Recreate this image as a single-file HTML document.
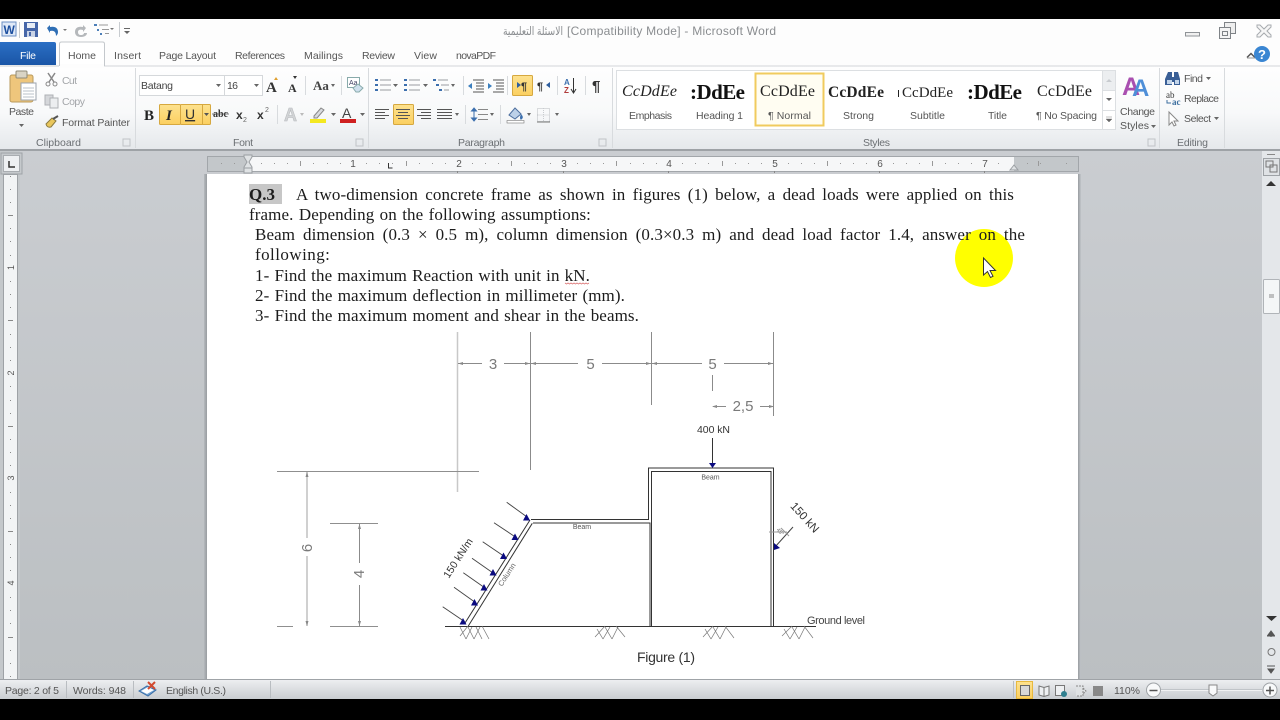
<!DOCTYPE html>
<html lang="en"><head><meta charset="utf-8"><title>Microsoft Word</title>
<style>
html,body{margin:0;padding:0;width:1280px;height:720px;overflow:hidden;background:#000}
#w{position:absolute;left:0;top:0;width:1280px;height:720px;filter:blur(.35px)}
#s{position:absolute;left:0;top:0;display:block}
.u{font-family:"Liberation Sans",sans-serif;font-size:10.5px;fill:#555}
.g{font-family:"Liberation Sans",sans-serif;font-size:10.500px;fill:#6b6f73}
.n{font-family:"Liberation Sans",sans-serif;font-size:10px;fill:#666}
.l{position:absolute;font-family:"Liberation Serif",serif;font-size:17px;line-height:20px;height:20px;color:#1c1c1c;letter-spacing:.1px;white-space:nowrap;overflow:hidden;text-align:justify;text-align-last:justify}
</style></head><body><div id="w">
<svg id="s" width="1280" height="720" viewBox="0 0 1280 720" xmlns="http://www.w3.org/2000/svg">
<defs>
<linearGradient id="rb" x1="0" y1="0" x2="0" y2="1"><stop offset="0" stop-color="#fefefe"/><stop offset=".55" stop-color="#f8f9fa"/><stop offset="1" stop-color="#e5e8eb"/></linearGradient>
<linearGradient id="bg" x1="0" y1="0" x2="0" y2="1"><stop offset="0" stop-color="#cacdd1"/><stop offset="1" stop-color="#bbbfc2"/></linearGradient>
<linearGradient id="st" x1="0" y1="0" x2="0" y2="1"><stop offset="0" stop-color="#eff0f2"/><stop offset="1" stop-color="#c9cdd1"/></linearGradient>
<linearGradient id="fl" x1="0" y1="0" x2="0" y2="1"><stop offset="0" stop-color="#2b6fc4"/><stop offset="1" stop-color="#1a55a6"/></linearGradient>
<linearGradient id="or" x1="0" y1="0" x2="0" y2="1"><stop offset="0" stop-color="#fde28f"/><stop offset="1" stop-color="#fbcf60"/></linearGradient>
<linearGradient id="sh" x1="0" y1="0" x2="1" y2="0"><stop offset="0" stop-color="#b5b9bd"/><stop offset="1" stop-color="#989ca0"/></linearGradient>
<linearGradient id="sr" x1="0" y1="0" x2="1" y2="0"><stop offset="0" stop-color="#989ca0"/><stop offset="1" stop-color="#c2c6ca"/></linearGradient>
</defs>

<!-- window chrome -->
<rect x="0" y="19" width="1280" height="680" fill="#fdfdfd"/>
<rect x="0" y="66" width="1280" height="84" fill="url(#rb)"/>
<line x1="0" y1="66" x2="59" y2="66" stroke="#c9cdd1"/><line x1="104" y1="66" x2="1280" y2="66" stroke="#d2d5d9"/>

<!-- QAT -->
<rect x="2" y="22" width="14" height="14" fill="#dfe9f7" stroke="#6b8fc4"/><text x="3.500" y="34" font-family="Liberation Sans" font-weight="bold" font-size="12" fill="#1d4f9f">W</text>
<line x1="19.500" y1="22" x2="19.500" y2="38" stroke="#c8ccd0"/>
<path d="M24 22h14v15h-14z" fill="#4666a8"/><rect x="27" y="23" width="8" height="5" fill="#e8edf5"/><rect x="27" y="31" width="8" height="6" fill="#c9d3e6"/><rect x="29" y="32" width="2" height="4" fill="#4666a8"/>
<path d="M47 28l3-3v2c5-1 8 1 8 5 0 2-1 3-2 4 0-4-2-6-6-5v2z" fill="#2f6fb5"/>
<path d="M63 29h4l-2 2z" fill="#777"/>
<path d="M86 28l-3-3v2c-5-1-8 1-8 5 0 3 2 5 6 5s6-2 6-4h-3c0 1-1 2-3 2s-3-1-3-3 2-3 5-2v2z" fill="#b5b8bb"/>
<g fill="#4d7fb8"><rect x="94" y="24" width="3" height="2"/><rect x="97" y="29" width="2" height="2"/><rect x="100" y="33" width="2" height="2"/></g>
<path d="M99 25h9M102 29.500h7M105 33.500h4" stroke="#999"/>
<path d="M110 28h4l-2 2z" fill="#777"/>
<line x1="119.500" y1="22" x2="119.500" y2="37" stroke="#c8ccd0"/>
<path d="M124 31h6l-3 3z" fill="#666"/><rect x="124" y="28" width="6" height="1" fill="#666"/>

<!-- title -->
<text x="503" y="35" font-family="Liberation Sans,DejaVu Sans,sans-serif" font-size="12" fill="#8a8d90" textLength="60" lengthAdjust="spacingAndGlyphs">الاسئلة التعليمية</text>
<text x="567" y="35" font-family="Liberation Sans,sans-serif" font-size="12" fill="#8a8d90" textLength="209">[Compatibility Mode]  -  Microsoft Word</text>

<!-- window controls -->
<rect x="1185.500" y="32.500" width="14" height="3.500" fill="#f0f0f0" stroke="#8f9397"/>
<rect x="1224.500" y="22.500" width="11" height="11" fill="#eee" stroke="#7f8387"/><rect x="1219.500" y="27.500" width="11" height="11" fill="#f4f4f4" stroke="#7f8387"/><rect x="1222.500" y="31.500" width="5" height="4" fill="none" stroke="#7f8387"/>
<path d="M1257 25l3 0 4 4 4-4 3 0 0 2-4 4 4 4 0 2-3 0-4-4-4 4-3 0 0-2 4-4-4-4z" fill="#f6f6f6" stroke="#a7abaf"/>
<path d="M1247 57.500l4-4 4 4" fill="none" stroke="#555" stroke-width="1.500"/><path d="M1247 58h8" stroke="#999"/>
<circle cx="1262" cy="54" r="8" fill="#3a86d2"/><text x="1262" y="59" text-anchor="middle" font-family="Liberation Sans" font-weight="bold" font-size="13" fill="#fff">?</text>

<!-- tabs -->
<path d="M0 42h54q2 0 2 2v21h-56z" fill="url(#fl)"/>
<text x="20" y="59" font-family="Liberation Sans" font-size="10.500" fill="#fff" textLength="16">File</text>
<path d="M59.500 66v-22q0-2 2-2h41q2 0 2 2v22" fill="#fff" stroke="#c4c8cc"/><rect x="60" y="64" width="44" height="4" fill="#fdfdfd"/>
<text class="u" x="68" y="59" textLength="28">Home</text>
<text class="u" x="114" y="59" textLength="27">Insert</text>
<text class="u" x="159" y="59" textLength="57">Page Layout</text>
<text class="u" x="235" y="59" textLength="50">References</text>
<text class="u" x="304" y="59" textLength="39">Mailings</text>
<text class="u" x="362" y="59" textLength="33">Review</text>
<text class="u" x="414" y="59" textLength="23">View</text>
<text class="u" x="456" y="59" textLength="40">novaPDF</text>

<!-- group separators -->
<g stroke="#d8dbde"><path d="M135.500 68v80M368.500 68v80M612.500 68v80M1159.500 68v80M1224.500 68v80"/></g>

<!-- clipboard -->
<rect x="10" y="75" width="23" height="27" rx="2" fill="#eec67c" stroke="#b99a5c"/><rect x="16" y="71" width="11" height="7" rx="1" fill="#d9d4c5" stroke="#8f8a78"/>
<path d="M21 83h15v17h-15z" fill="#fff" stroke="#9ba3ad"/><path d="M23 88h11M23 91h11M23 94h11M23 97h11" stroke="#b9c0c9"/>
<text class="u" x="9" y="115" textLength="25">Paste</text>
<path d="M19 124h5l-2.500 3z" fill="#666"/>
<path d="M48 73l6 9M55 73l-6 9" stroke="#888" stroke-width="1.500"/><circle cx="48" cy="84" r="2" fill="none" stroke="#888"/><circle cx="55" cy="84" r="2" fill="none" stroke="#888"/>
<text x="62" y="84" style="font:10.500px 'Liberation Sans',sans-serif;fill:#a3a6a9" textLength="15">Cut</text>
<rect x="45" y="95" width="8" height="10" fill="#d5d7da" stroke="#aeb1b5"/><rect x="50" y="98" width="8" height="10" fill="#eceef0" stroke="#aeb1b5"/>
<text x="62" y="105" style="font:10.500px 'Liberation Sans',sans-serif;fill:#a3a6a9" textLength="23">Copy</text>
<path d="M46 124l6-6 4 3-5 6q-4 1-5-3z" fill="#e9c65c" stroke="#8a7a40"/><path d="M53 119l5-3" stroke="#555" stroke-width="2"/>
<text class="u" x="62" y="126" textLength="68">Format Painter</text>
<text class="g" x="36" y="146" textLength="45">Clipboard</text>
<rect x="123" y="139" width="7" height="7" fill="none" stroke="#c0c3c7"/>

<!-- font -->
<rect x="139.500" y="75.500" width="85" height="20" fill="#fff" stroke="#d5d8db"/><rect x="224.500" y="75.500" width="38" height="20" fill="#fff" stroke="#d5d8db"/>
<text class="u" x="141" y="89" textLength="32" style="fill:#444">Batang</text><path d="M216 84h5l-2.500 3z" fill="#666"/>
<text class="u" x="227" y="89" textLength="11" style="fill:#444">16</text><path d="M254 84h5l-2.500 3z" fill="#666"/>
<text x="266" y="92" font-family="Liberation Serif" font-weight="bold" font-size="15" fill="#333">A</text><path d="M276 77l2 3h-4z" fill="#e0a030"/>
<text x="288" y="92" font-family="Liberation Serif" font-weight="bold" font-size="12" fill="#333">A</text><path d="M295 79l2 -3h-4z" fill="#333"/>
<line x1="305.500" y1="76" x2="305.500" y2="95" stroke="#d8dbde"/>
<text x="313" y="90" font-family="Liberation Serif" font-weight="bold" font-size="13" fill="#444">Aa</text><path d="M331 84h4l-2 3z" fill="#666"/>
<line x1="341.500" y1="76" x2="341.500" y2="95" stroke="#d8dbde"/>
<rect x="347.500" y="77.500" width="12" height="10" fill="#fff" stroke="#8aa"/><text x="349" y="85" font-family="Liberation Sans" font-size="7" fill="#446">Aa</text><path d="M353 88l5-4 5 4-4 4h-3z" fill="#cfe0ee" stroke="#8aa"/>
<text x="144" y="120" font-family="Liberation Serif" font-weight="bold" font-size="15" fill="#222">B</text>
<rect x="159.500" y="104.500" width="21" height="20" rx="1" fill="url(#or)" stroke="#d6a83f"/>
<text x="166" y="120" font-family="Liberation Serif" font-style="italic" font-weight="bold" font-size="15" fill="#222">I</text>
<rect x="180.500" y="104.500" width="30" height="20" rx="1" fill="url(#or)" stroke="#d6a83f"/><line x1="202.500" y1="105" x2="202.500" y2="124" stroke="#d6a83f"/>
<text x="185" y="119" font-family="Liberation Sans" font-size="14" fill="#333" text-decoration="underline">U</text><path d="M204 113h5l-2.500 3z" fill="#555"/>
<text x="213" y="117" font-family="Liberation Serif" font-weight="bold" font-size="10" fill="#333" textLength="15">abc</text><path d="M212 114h17" stroke="#555" stroke-width=".8"/>
<text x="236" y="119" font-family="Liberation Sans" font-weight="bold" font-size="12" fill="#333">x</text><text x="243" y="122" font-family="Liberation Sans" font-size="7" fill="#666">2</text>
<text x="257" y="119" font-family="Liberation Sans" font-weight="bold" font-size="12" fill="#333">x</text><text x="265" y="112" font-family="Liberation Sans" font-size="7" fill="#666">2</text>
<line x1="277.500" y1="105" x2="277.500" y2="124" stroke="#d8dbde"/>
<text x="284" y="121" font-family="Liberation Sans" font-weight="bold" font-size="18" fill="#d2d4d6" stroke="#b5b8bb" stroke-width=".5">A</text>
<path d="M300 113h4l-2 3z" fill="#bbb"/>
<path d="M314 116l7-8 3 2-7 8h-3z" fill="#d8dade" stroke="#888"/><rect x="310" y="119" width="16" height="4" fill="#f4e820"/><path d="M331 113h5l-2.500 3z" fill="#666"/>
<text x="342" y="118" font-family="Liberation Sans" font-size="14" fill="#444">A</text><rect x="340" y="119" width="16" height="4" fill="#cf2020"/><path d="M360 113h5l-2.500 3z" fill="#666"/>
<text class="g" x="233" y="146" textLength="20">Font</text>
<rect x="356" y="139" width="7" height="7" fill="none" stroke="#c0c3c7"/>

<!-- paragraph -->
<g stroke="#9a9da1"><path d="M380 80h11M380 85h11M380 90h11M409 80h11M409 85h11M409 90h11"/></g>
<g fill="#3c6fae"><rect x="375" y="79" width="3" height="2"/><rect x="375" y="84" width="3" height="2"/><rect x="375" y="89" width="3" height="2"/><rect x="404" y="79" width="3" height="2"/><rect x="404" y="84" width="3" height="2"/><rect x="404" y="89" width="3" height="2"/><rect x="433" y="79" width="3" height="2"/><rect x="436" y="84" width="3" height="2"/><rect x="439" y="89" width="3" height="2"/></g>
<path d="M438 80h10M441 85h8M444 90h5" stroke="#9a9da1"/>
<path d="M393 84h5l-2.500 3zM423 84h5l-2.500 3zM451 84h4l-2 3z" fill="#666"/>
<line x1="463.500" y1="76" x2="463.500" y2="95" stroke="#d8dbde"/>
<path d="M473 80h11M476 83h8M476 86h8M476 89h8M473 92h11" stroke="#555"/><path d="M468 86l4-3v6z" fill="#3c7fbe"/>
<path d="M493 80h11M496 83h8M496 86h8M496 89h8M493 92h11" stroke="#555"/><path d="M492 86l-4-3v6z" fill="#3c7fbe"/>
<line x1="507.500" y1="76" x2="507.500" y2="95" stroke="#d8dbde"/>
<rect x="512.500" y="75.500" width="20" height="20" rx="1" fill="url(#or)" stroke="#d6a83f"/>
<path d="M517 82l4 3-4 3z" fill="#2f5f9f"/><text x="521" y="90" font-family="Liberation Sans" font-weight="bold" font-size="11" fill="#333">¶</text>
<text x="537" y="90" font-family="Liberation Sans" font-weight="bold" font-size="11" fill="#333">¶</text><path d="M550 82l-4 3 4 3z" fill="#2f5f9f"/>
<line x1="557.500" y1="76" x2="557.500" y2="95" stroke="#d8dbde"/>
<text x="564" y="85" font-family="Liberation Sans" font-weight="bold" font-size="8" fill="#3c6fae">A</text><text x="564" y="93" font-family="Liberation Sans" font-weight="bold" font-size="8" fill="#b03a3a">Z</text>
<path d="M573.500 78v14M571 89l2.500 4 2.500-4" stroke="#333" fill="none"/>
<line x1="585.500" y1="76" x2="585.500" y2="95" stroke="#d8dbde"/>
<text x="592" y="91" font-family="Liberation Sans" font-weight="bold" font-size="15" fill="#333">¶</text>
<path d="M375 109.500h14M375 112.500h10M375 115.500h14M375 118.500h10" stroke="#555"/>
<rect x="393.500" y="104.500" width="20" height="20" rx="1" fill="url(#or)" stroke="#d6a83f"/>
<path d="M396 109.500h14M398 112.500h10M396 115.500h14M398 118.500h10" stroke="#555"/>
<path d="M417 109.500h14M421 112.500h10M417 115.500h14M421 118.500h10" stroke="#555"/>
<path d="M437 109.500h15M437 112.500h15M437 115.500h15M437 118.500h15" stroke="#555"/>
<path d="M455 113h4l-2 3z" fill="#666"/>
<line x1="465.500" y1="105" x2="465.500" y2="124" stroke="#d8dbde"/>
<path d="M478 109.500h10M478 114.500h10M478 119.500h10" stroke="#888"/><path d="M474 108l2.500 3h-5zM474 121l2.500-3h-5zM474 111v7" stroke="#3c6fae" fill="#3c6fae"/>
<path d="M490 113h4l-2 3z" fill="#666"/>
<line x1="500.500" y1="105" x2="500.500" y2="124" stroke="#d8dbde"/>
<path d="M509 115l6-7 6 6-6 5z" fill="#bcd0e8" stroke="#4d6f9f"/><path d="M521 114q3 3 1 5t-2-2z" fill="#3c6fae"/><rect x="507" y="120.500" width="17" height="2.500" fill="#fff" stroke="#777" stroke-width=".6"/>
<path d="M527 113h4l-2 3z" fill="#666"/>
<rect x="537.500" y="108.500" width="12" height="13" fill="none" stroke="#b8bbbf" stroke-dasharray="1 1"/><path d="M537.500 115h12M543.500 108v13" stroke="#c8cbcf" stroke-dasharray="1 1"/><path d="M537 122h13" stroke="#777"/>
<path d="M555 113h4l-2 3z" fill="#666"/>
<text class="g" x="458" y="146" textLength="47">Paragraph</text>
<rect x="599" y="139" width="7" height="7" fill="none" stroke="#c0c3c7"/>

<!-- styles gallery -->
<rect x="616.500" y="70.500" width="486" height="59" fill="#fff" stroke="#dcdfe2"/>
<rect x="755.500" y="73.500" width="68" height="52" fill="#fffdf2" stroke="#f0cb5e" stroke-width="2"/>
<g font-family="Liberation Serif,serif" fill="#222">
<text x="622" y="96" font-size="16" font-style="italic" textLength="55">CcDdEe</text>
<text x="690" y="99" font-size="21" font-weight="bold" fill="#111" textLength="55">:DdEe</text>
<text x="760" y="96" font-size="16" textLength="55">CcDdEe</text>
<text x="828" y="97" font-size="15.500" font-weight="bold" textLength="56">CcDdEe</text>
<rect x="898" y="90" width="1" height="7" fill="#222"/>
<text x="902" y="97" font-size="15" textLength="51">CcDdEe</text>
<text x="967" y="99" font-size="21" font-weight="bold" fill="#111" textLength="55">:DdEe</text>
<text x="1037" y="96" font-size="16" textLength="55">CcDdEe</text>
</g>
<text class="u" x="629" y="119" textLength="43">Emphasis</text>
<text class="u" x="696" y="119" textLength="47">Heading 1</text>
<text class="u" x="768" y="119" textLength="43">¶ Normal</text>
<text class="u" x="843" y="119" textLength="31">Strong</text>
<text class="u" x="910" y="119" textLength="35">Subtitle</text>
<text class="u" x="988" y="119" textLength="19">Title</text>
<text class="u" x="1036" y="119" textLength="61">¶ No Spacing</text>
<rect x="1102.500" y="70.500" width="13" height="20" fill="#eceef0" stroke="#dcdfe2"/><rect x="1102.500" y="90.500" width="13" height="20" fill="#fff" stroke="#dcdfe2"/><rect x="1102.500" y="110.500" width="13" height="19" fill="#fff" stroke="#dcdfe2"/>
<path d="M1106 82l3-3 3 3z" fill="#c8cbcf"/><path d="M1106 98h6l-3 3z" fill="#666"/><path d="M1106 117h6M1106 119h6l-3 3z" fill="#666" stroke="#666" stroke-width=".4"/>
<text x="1122" y="95" font-family="Liberation Sans" font-weight="bold" font-size="25" fill="#a94fb0">A</text>
<text x="1132" y="96" font-family="Liberation Sans" font-weight="bold" font-size="24" fill="#4f8fd8">A</text>
<text class="u" x="1120" y="115" textLength="35">Change</text>
<text class="u" x="1120" y="129" textLength="29">Styles</text><path d="M1151 125h5l-2.500 3z" fill="#666"/>
<text class="g" x="863" y="146" textLength="27">Styles</text>
<rect x="1148" y="139" width="7" height="7" fill="none" stroke="#c0c3c7"/>

<!-- editing -->
<path d="M1168 72h4v5h2v-5h4l2 7v6h-6v-3h-2v3h-7v-6z" fill="#3a5f96"/><rect x="1167" y="80" width="5" height="4" fill="#c3d5ea"/><rect x="1175" y="80" width="4" height="4" fill="#c3d5ea"/>
<text class="u" x="1184" y="82" textLength="19">Find</text><path d="M1206 77h5l-2.500 3z" fill="#666"/>
<text x="1166" y="98" font-family="Liberation Serif" font-size="9" fill="#333">ab</text><text x="1172" y="105" font-family="Liberation Serif" font-weight="bold" font-size="9" fill="#3c6f9f">ac</text><path d="M1167 100v3h4" fill="none" stroke="#3c6f9f"/>
<text class="u" x="1184" y="102" textLength="35">Replace</text>
<path d="M1169 112v13l3-3 2 4 2-1-2-4h4z" fill="#fff" stroke="#888"/>
<text class="u" x="1184" y="122" textLength="27">Select</text><path d="M1214 117h5l-2.500 3z" fill="#666"/>
<text class="g" x="1177" y="146" textLength="31">Editing</text>

<!-- workspace -->
<rect x="0" y="150" width="1262" height="529" fill="url(#bg)"/>
<rect x="0" y="149" width="1280" height="2" fill="#9ea2a6"/>
<rect x="1262" y="151" width="18" height="528" fill="#e4e7ea"/>
<rect x="0" y="151" width="20" height="528" fill="#c4c8cb"/>
<!-- L -->
<rect x="1" y="153" width="21" height="21" fill="#c5c9cc" stroke="#9fa3a7"/><rect x="3.500" y="155.500" width="16" height="16" fill="#eef0f2" stroke="#a9adb1"/><path d="M9 161v6h6" fill="none" stroke="#333" stroke-width="1.500"/>
<!-- vertical ruler -->
<rect x="3.500" y="174.500" width="14" height="505" fill="#f2f4f5" stroke="#9ea2a6"/>
<g fill="#888"><path d="M10 176h1v1h-1zM10 189h1v1h-1zM10 202h1v1h-1zM10 228h1v1h-1zM10 241h1v1h-1zM10 255h1v1h-1zM10 281h1v1h-1zM10 294h1v1h-1zM10 307h1v1h-1zM10 334h1v1h-1zM10 347h1v1h-1zM10 360h1v1h-1zM10 386h1v1h-1zM10 400h1v1h-1zM10 413h1v1h-1zM10 439h1v1h-1zM10 452h1v1h-1zM10 465h1v1h-1zM10 492h1v1h-1zM10 505h1v1h-1zM10 518h1v1h-1zM10 544h1v1h-1zM10 557h1v1h-1zM10 570h1v1h-1zM10 597h1v1h-1zM10 610h1v1h-1zM10 623h1v1h-1zM10 650h1v1h-1zM10 663h1v1h-1zM10 676h1v1h-1z"/>
<path d="M8 215h5v1h-5zM8 320h5v1h-5zM8 426h5v1h-5zM8 531h5v1h-5zM8 637h5v1h-5z"/></g>
<g style="font:9px 'Liberation Sans',sans-serif;fill:#555" text-anchor="middle">
<text transform="translate(14,267.500) rotate(-90)">1</text><text transform="translate(14,373) rotate(-90)">2</text><text transform="translate(14,478) rotate(-90)">3</text><text transform="translate(14,583) rotate(-90)">4</text></g>

<!-- horizontal ruler -->
<rect x="207.500" y="156.500" width="871" height="15" fill="#c3c7ca" stroke="#a2a6aa"/>
<rect x="248" y="157" width="766" height="14" fill="#f6f7f8"/>
<g fill="#999"><path d="M221 163h1v1h-1zM234 163h1v1h-1zM261 163h1v1h-1zM274 163h1v1h-1zM287 163h1v1h-1zM313 163h1v1h-1zM327 163h1v1h-1zM340 163h1v1h-1zM366 163h1v1h-1zM379 163h1v1h-1zM392 163h1v1h-1zM419 163h1v1h-1zM432 163h1v1h-1zM445 163h1v1h-1zM472 163h1v1h-1zM485 163h1v1h-1zM498 163h1v1h-1zM524 163h1v1h-1zM537 163h1v1h-1zM550 163h1v1h-1zM577 163h1v1h-1zM590 163h1v1h-1zM603 163h1v1h-1zM630 163h1v1h-1zM643 163h1v1h-1zM656 163h1v1h-1zM682 163h1v1h-1zM695 163h1v1h-1zM708 163h1v1h-1zM735 163h1v1h-1zM748 163h1v1h-1zM761 163h1v1h-1zM788 163h1v1h-1zM801 163h1v1h-1zM814 163h1v1h-1zM840 163h1v1h-1zM853 163h1v1h-1zM866 163h1v1h-1zM893 163h1v1h-1zM906 163h1v1h-1zM919 163h1v1h-1zM945 163h1v1h-1zM958 163h1v1h-1zM971 163h1v1h-1zM998 163h1v1h-1zM1027 163h1v1h-1zM1040 163h1v1h-1zM1066 163h1v1h-1z"/>
<path d="M300 161h1v5h-1zM406 161h1v5h-1zM511 161h1v5h-1zM616 161h1v5h-1zM722 161h1v5h-1zM827 161h1v5h-1zM932 161h1v5h-1zM1038 161h1v5h-1z"/></g>
<g style="font:10px 'Liberation Sans',sans-serif;fill:#555" text-anchor="middle"><text x="353" y="167">1</text><text x="459" y="167">2</text><text x="564" y="167">3</text><text x="669" y="167">4</text><text x="775" y="167">5</text><text x="880" y="167">6</text><text x="985" y="167">7</text></g>
<path d="M244 155h8v2l-3 5 3 5v6h-8v-6l3-5-3-5z" fill="#dfe2e4" stroke="#9a9ea2"/><path d="M244 168h8" stroke="#9a9ea2"/>
<path d="M1010 170l4-5 4 5z" fill="#dfe2e4" stroke="#9a9ea2"/>
<path d="M388.500 163v5h4" fill="none" stroke="#333"/>
<g fill="#888"><rect x="457" y="171" width="1" height="2"/><rect x="563" y="171" width="1" height="2"/><rect x="668" y="171" width="1" height="2"/><rect x="774" y="171" width="1" height="2"/><rect x="879" y="171" width="1" height="2"/><rect x="984" y="171" width="1" height="2"/></g>

<!-- page -->
<rect x="204" y="174" width="3" height="505" fill="url(#sh)"/><rect x="1078" y="174" width="3" height="505" fill="url(#sr)"/>
<rect x="207" y="174" width="871" height="505" fill="#fff"/>
<rect x="249" y="184" width="33" height="20" fill="#c7c7c7"/>
<circle cx="984" cy="258" r="29" fill="#ffff00"/>

<!-- figure -->
<g fill="none" stroke="#8b8b8b">
<path d="M457.500 332v160" stroke="#c8c8c8" stroke-width="1.500"/>
<path d="M530.500 332v138M651.500 332v73M773.500 332v84M712.500 375v16"/>
<path d="M458 363.500h24M504 363.500h26M531 363.500h47M602 363.500h49M652 363.500h50M724 363.500h49M713 406.500h13M760 406.500h13"/>
<path d="M277 471.500h202M330 523.500h48M330 626.500h48M277 626.500h16" stroke="#8f8f8f"/>
<path d="M307 472v66M307 556v70" stroke="#c0c0c0" stroke-width="1.500"/>
<path d="M359.500 524v39M359.500 585v41"/>
</g>
<g fill="#888"><path d="M458 363.500l5-1.500v3zM530 363.500l-5-1.500v3zM531 363.500l5-1.500v3zM651 363.500l-5-1.500v3zM652 363.500l5-1.500v3zM773 363.500l-5-1.500v3zM712 406.500l5-1.500v3zM774 406.500l-5-1.500v3zM307 472l-1.500 5h3zM307 626l-1.500-5h3zM359.500 524l-1.500 5h3zM359.500 626l-1.500-5h3z"/></g>
<g fill="#7a7a7a" font-family="Liberation Sans,sans-serif" font-size="15" text-anchor="middle">
<text x="493" y="369">3</text>
<text x="590.500" y="369">5</text>
<text x="712.500" y="369">5</text>
<text x="743" y="411">2,5</text>
<text transform="translate(312,548) rotate(-90)">6</text>
<text transform="translate(364,574) rotate(-90)">4</text>
</g>
<g fill="none" stroke="#333">
<path d="M712.500 438v26"/>
<path d="M531 519.500h117.500v-51.500h125v158.500"/>
<path d="M533 523h117v103M651.500 626v-154.500h119.500v154.500"/>
<path d="M530 520l-65 103M532.300 523.300l-64 102.700"/>
<path d="M445 626.500h371"/>
</g>
<path d="M709 463h7l-3.500 5z" fill="#0a0a80"/>
<g stroke="#444" fill="none" stroke-width=".9">
<path d="M506.700 502.300l20 14.400M494 522.700l21 14M482.700 541.700l20.600 14M472 558.300l20.700 14.400M463.300 572.700l20.700 14.600M454 587.300l20.700 14.700M442.700 606.700l20.600 14"/>
</g>
<g fill="#0a0a80"><path d="M526.500 514l3.500 6.500h-7zM515 533.500l3.500 6.500h-7zM503.500 552.500l3.500 6.500h-7zM493 569l3.500 6.500h-7zM484 584l3.500 6.500h-7zM474.500 599l3.500 6.500h-7zM463 618l3.500 6.500h-7z"/></g>
<g stroke="#777" fill="none" stroke-width=".7">
<path d="M460 636l8-10M466 639l-6-12M466 639l6-12M474 639l-6-12M474 639l6-12M482 639l-6-12M489 639l-7-13"/>
<path d="M595 637l10-11M603 639l-6-10M603 639l7-12M612 639l-7-12M612 639l6-12M625 637l-9-11"/>
<path d="M703 637l10-11M711 639l-6-10M711 639l7-12M720 639l-7-12M720 639l6-12M734 638l-9-12"/>
<path d="M782 636l10-10M790 639l-6-10M790 639l7-12M799 639l-7-12M799 639l6-12M813 638l-9-12"/>
</g>
<path d="M793 527l-18 20" stroke="#444" fill="none"/><path d="M769 532h18" stroke="#999" fill="none"/><path d="M781 528l8 8" stroke="#999" fill="none"/>
<path d="M774 543l6 5-6 2z" fill="#0a0a80"/>
<g font-family="Liberation Sans,sans-serif">
<text x="697" y="433" font-size="10.500" fill="#333" textLength="33">400 kN</text>
<text x="582" y="529" font-size="7" fill="#555" text-anchor="middle">Beam</text>
<text x="710.500" y="479.500" font-size="7" fill="#555" text-anchor="middle">Beam</text>
<text transform="translate(461,560) rotate(-57)" font-size="10.500" fill="#333" text-anchor="middle">150 kN/m</text>
<text transform="translate(509,576) rotate(-57)" font-size="7.500" fill="#666" text-anchor="middle">Column</text>
<text transform="translate(802,520) rotate(48)" font-size="11.500" fill="#333" text-anchor="middle">150 kN</text>
<text transform="translate(779,533) rotate(48)" font-size="5.500" fill="#777" text-anchor="middle">45°</text>
<text x="807" y="624" font-size="11" fill="#444" textLength="58">Ground level</text>
<text x="637" y="662" font-size="14" fill="#333" textLength="58">Figure (1)</text>
</g>

<!-- scrollbar -->
<rect x="1263.500" y="158.500" width="16" height="17" fill="#dfe2e5" stroke="#9ea2a6"/><rect x="1266" y="161" width="7" height="6" fill="none" stroke="#777"/><rect x="1270" y="165" width="7" height="7" fill="none" stroke="#777"/>
<path d="M1267 154.500h8" stroke="#888"/>
<path d="M1266 186l5-5 5 5z" fill="#333"/>
<rect x="1263.500" y="279.500" width="16" height="34" rx="1" fill="#f4f6f7" stroke="#b0b4b8"/><path d="M1269 295h5M1269 297h5" stroke="#888"/>
<path d="M1266 616h11l-5.500 5z" fill="#333"/>
<path d="M1267 636h8M1271 631l-3 4h6zM1271 636v1" stroke="#555" fill="#555"/>
<circle cx="1271.500" cy="652" r="3.500" fill="none" stroke="#777"/>
<path d="M1267 666h8M1271 673l-3-4h6z" stroke="#555" fill="#555"/>

<!-- status bar -->
<rect x="0" y="679" width="1280" height="20" fill="url(#st)"/>
<line x1="0" y1="679.500" x2="1280" y2="679.500" stroke="#9fa3a7"/>
<text class="u" x="5" y="694" textLength="54">Page: 2 of 5</text><text class="u" x="73" y="694" textLength="53">Words: 948</text><text class="u" x="166" y="694" textLength="60">English (U.S.)</text><text class="u" x="1114" y="694" textLength="26">110%</text>
<path d="M66.500 681v17M133.500 681v17M270.500 681v17M1013.500 681v17" stroke="#b9bdc1"/>
<path d="M139 691l8-5 9 4-8 6z" fill="#6f9fd0" stroke="#3a6fa8"/><path d="M141 691l7-4 6 3-7 4z" fill="#fff"/><path d="M148 682l7 7M155 682l-7 7" stroke="#d24a30" stroke-width="2"/>
<rect x="1016.500" y="681.500" width="16" height="17" fill="url(#or)" stroke="#e8b93e"/><rect x="1020.500" y="685.500" width="9" height="10" fill="#d8d8d8" stroke="#666"/>
<path d="M1039 686l5 1.500 5-1.500v9l-5 1.500-5-1.500zM1044 687v9" fill="#eef0f2" stroke="#777"/>
<rect x="1055.500" y="685.500" width="9" height="10" fill="#eef0f2" stroke="#777"/><circle cx="1064" cy="694" r="3" fill="#2f7f8f"/>
<path d="M1076 686h7v10h-7M1083 688l3 3-3 3" fill="#dfe2e4" stroke="#888" stroke-dasharray="2 1"/>
<rect x="1093" y="686" width="10" height="10" fill="#888"/>
<circle cx="1153.500" cy="690" r="7" fill="#f8f9fa" stroke="#9ea2a6"/><path d="M1149.500 690.500h8" stroke="#555" stroke-width="1.500"/>
<path d="M1161 689.500h101" stroke="#c0c4c8"/><path d="M1161 690.500h101" stroke="#f0f1f2"/>
<path d="M1209 685h8v8l-4 3-4-3z" fill="#f8f9fa" stroke="#888"/>
<circle cx="1270" cy="690" r="7" fill="#f8f9fa" stroke="#9ea2a6"/><path d="M1266 690.500h8M1270 686.500v8" stroke="#555" stroke-width="1.500"/>
</svg>

<div class="l" style="left:249px;top:185px;width:34px;font-weight:bold;text-align-last:left;letter-spacing:0">Q.3</div>
<div class="l" style="left:296px;top:185px;width:718px">A two-dimension concrete frame as shown in figures (1) below, a dead loads were applied on this</div>
<div class="l" style="left:249px;top:205px;width:342px">frame. Depending on the following assumptions:</div>
<div class="l" style="left:255px;top:225px;width:770px">Beam dimension (0.3 × 0.5 m), column dimension (0.3×0.3 m) and dead load factor 1.4, answer on the</div>
<div class="l" style="left:255px;top:245px;width:74px;text-align-last:left;letter-spacing:.45px">following:</div>
<div class="l" style="left:255px;top:266px;width:335px">1- Find the maximum Reaction with unit in kN.</div>
<div class="l" style="left:255px;top:286px;width:370px">2- Find the maximum deflection in millimeter (mm).</div>
<div class="l" style="left:255px;top:306px;width:384px">3- Find the maximum moment and shear in the beams.</div>

<svg width="1280" height="720" style="position:absolute;left:0;top:0;pointer-events:none" xmlns="http://www.w3.org/2000/svg">
<path d="M565 283l1.500 1 1.500-1 1.500 1 1.500-1 1.500 1 1.500-1 1.500 1 1.500-1 1.500 1 1.500-1 1.500 1 1.500-1 1.500 1 1.500-1 1.500 1 1.500-1" fill="none" stroke="#d77" stroke-width=".8"/>
<path d="M983.500 258v17l4-3.500 3 6 2.500-1.200-3-5.800h5.500z" fill="#fff" stroke="#333" stroke-width="1"/>
</svg>
</div></body></html>
